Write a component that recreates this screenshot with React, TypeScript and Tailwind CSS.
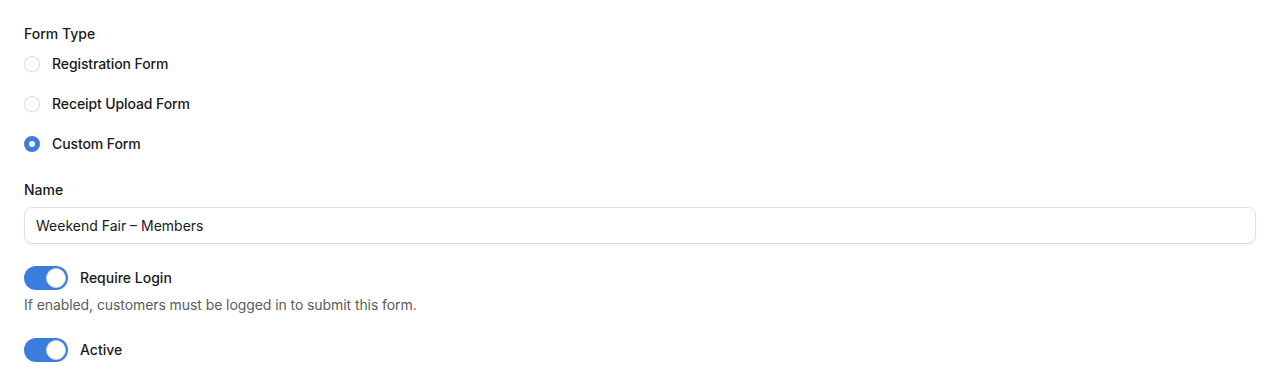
import React, { useState } from 'react'

const types = ['Registration Form', 'Receipt Upload Form', 'Custom Form']

function Toggle({ on, onClick }: { on: boolean; onClick: () => void }) {
  return (
    <button
      type="button"
      onClick={onClick}
      className={`relative h-6 w-11 shrink-0 rounded-full ${on ? 'bg-[#3b7ddd]' : 'bg-gray-300'}`}
    >
      <span
        className={`absolute top-0.5 h-5 w-5 rounded-full bg-white border border-[#d6d6d6] ${on ? 'left-[22px]' : 'left-0.5'}`}
      />
    </button>
  )
}

export default function App() {
  const [type, setType] = useState('Custom Form')
  const [requireLogin, setRequireLogin] = useState(true)
  const [active, setActive] = useState(true)

  return (
    <div className="min-h-[384px] bg-white px-6 pt-[25px] text-[#1a1a1a] font-['Inter',sans-serif] text-sm">
      <div className="font-medium leading-[18px]">Form Type</div>
      <div className="mt-3 flex flex-col gap-[22px]">
        {types.map((t) => (
          <label key={t} className="flex h-[18px] cursor-pointer items-center gap-3" onClick={() => setType(t)}>
            {type === t ? (
              <span className="h-4 w-4 rounded-full border-[5px] border-[#3b7ddd] bg-white" />
            ) : (
              <span className="h-4 w-4 rounded-full border border-[#dcdcdc] bg-white shadow-[0_1px_1px_rgba(0,0,0,0.04)]" />
            )}
            <span className="font-medium tracking-[-0.1px]">{t}</span>
          </label>
        ))}
      </div>

      <div className="mt-[28px] font-medium leading-[18px]">Name</div>
      <input
        className="mt-2 h-[37px] w-full rounded-lg border border-[#dedede] px-[11px] text-sm text-[#1a1a1a] shadow-[0_1px_2px_rgba(0,0,0,0.05)] outline-none"
        defaultValue="Weekend Fair – Members"
      />

      <div className="mt-[22px] flex items-center gap-3">
        <Toggle on={requireLogin} onClick={() => setRequireLogin(!requireLogin)} />
        <span className="font-medium">Require Login</span>
      </div>
      <p className="mt-[5px] text-sm leading-5 tracking-[-0.08px] text-[#5c5c5c]">
        If enabled, customers must be logged in to submit this form.
      </p>

      <div className="mt-[23px] flex items-center gap-3">
        <Toggle on={active} onClick={() => setActive(!active)} />
        <span className="font-medium">Active</span>
      </div>
    </div>
  )
}
